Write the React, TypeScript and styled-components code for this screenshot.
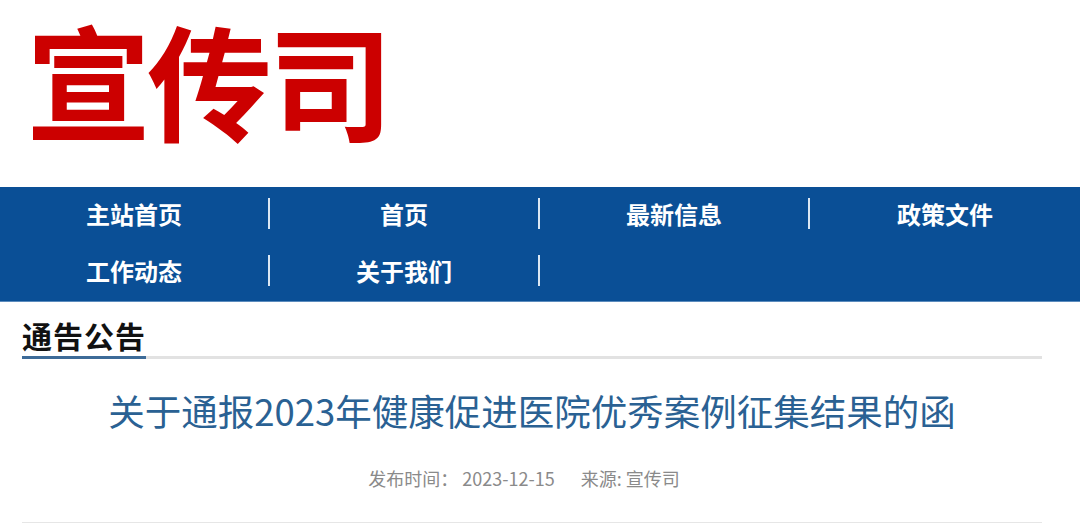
import styled, { createGlobalStyle } from 'styled-components'

const GlobalStyle = createGlobalStyle`
  html, body {
    margin: 0;
    padding: 0;
    background: #ffffff;
  }
  body {
    font-family: "Noto Sans CJK SC", "Noto Sans", sans-serif;
  }
`

const Page = styled.div`
  width: 1080px;
  height: 532px;
  overflow: hidden;
  background: #ffffff;
`

const Banner = styled.header`
  height: 187px;
  padding: 10px 0 0 26px;
  box-sizing: border-box;
`

const Logo = styled.h1`
  display: inline-block;
  margin: 0;
  padding-right: 12px;
  color: #cc0000;
  font-size: 125px;
  font-weight: 700;
  line-height: 135px;
  letter-spacing: -4px;
  white-space: nowrap;
`

const Nav = styled.nav`
  background: #0a4f96;
  display: grid;
  grid-template-columns: repeat(4, 1fr);
  padding: 11px 0 15px;
  row-gap: 26px;
  border-bottom: 1px solid #5b8bbd;
`

const NavItem = styled.a`
  display: flex;
  align-items: center;
  justify-content: center;
  height: 31px;
  color: #ffffff;
  font-size: 24px;
  font-weight: 700;
  text-decoration: none;
  border-right: 2px solid #dbe7f3;

  &:nth-child(4n) {
    border-right: none;
  }
`

const Content = styled.main`
  margin: 0 38px 0 22px;
`

const SectionHead = styled.div`
  margin-top: 14px;
  border-bottom: 3px solid #e2e2e2;
  display: flex;
`

const SectionTitle = styled.h2`
  margin: 0 0 -3px;
  padding-bottom: 2px;
  font-size: 30px;
  font-weight: 700;
  line-height: 38px;
  letter-spacing: 1px;
  color: #111111;
  border-bottom: 3px solid #3d6b98;
`

const ArticleTitle = styled.h3`
  margin: 28px 0 0;
  text-align: center;
  color: #2a6193;
  font-size: 36.5px;
  font-weight: 400;
  line-height: 48px;
`

const Meta = styled.div`
  margin-top: 30px;
  padding: 0 16px 31px 0;
  text-align: center;
  color: #8a8a8a;
  font-size: 18px;
  line-height: 26px;
  border-bottom: 1px solid #e6e6e6;
`

const MetaPart = styled.span`
  & + & {
    margin-left: 26px;
  }
`

const navLinks = ['主站首页', '首页', '最新信息', '政策文件', '工作动态', '关于我们']

const App = (): JSX.Element => {
  return (
    <>
      <GlobalStyle />
      <Page>
        <Banner>
          <Logo>宣传司</Logo>
        </Banner>
        <Nav>
          {navLinks.map((label) => (
            <NavItem key={label} href='#'>
              {label}
            </NavItem>
          ))}
        </Nav>
        <Content>
          <SectionHead>
            <SectionTitle>通告公告</SectionTitle>
          </SectionHead>
          <ArticleTitle>关于通报2023年健康促进医院优秀案例征集结果的函</ArticleTitle>
          <Meta>
            <MetaPart>发布时间： 2023-12-15</MetaPart>
            <MetaPart>来源: 宣传司</MetaPart>
          </Meta>
        </Content>
      </Page>
    </>
  )
}

export default App
